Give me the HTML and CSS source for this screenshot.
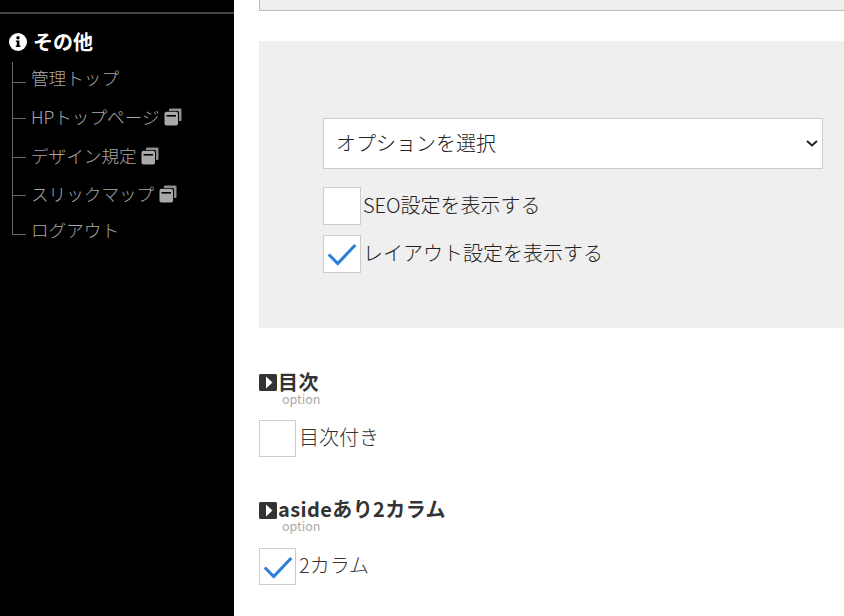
FILE: index.html
```html
<!DOCTYPE html>
<html lang="ja">
<head>
    <meta charset="UTF-8">
    <meta name="viewport" content="width=device-width, initial-scale=1.0">
    <title>その他</title>
    <link rel="stylesheet" href="styles.css">
</head>
<body>
    <svg class="defs" width="0" height="0">
        <symbol id="copy" viewBox="0 0 18 18">
            <path d="M5 1.5Q5 0.5 6 0.5H16.5Q17.5 0.5 17.5 1.5V12Q17.5 13 16.5 13H15V4.5Q15 3 13.5 3H5Z" fill="#8d8d8d"/>
            <rect x="0.5" y="3.8" width="13.5" height="13.7" rx="2" fill="#a9a9a9"/>
            <rect x="2.5" y="7" width="9.5" height="1.6" fill="#000"/>
        </symbol>
        <symbol id="tick" viewBox="0 0 38 38">
            <path d="M5 19.5L14.5 29L33 9.5" fill="none" stroke="#2b7fd6" stroke-width="3.2"/>
        </symbol>
        <symbol id="arrow" viewBox="0 0 18 18">
            <rect width="18" height="17" rx="1.5" fill="#333"/>
            <path d="M7 2.5L13.5 8.5L7 14.5Z" fill="#fff"/>
        </symbol>
    </svg>

    <div class="page">
        <nav class="sidebar">
            <h2 class="side-title">
                <svg class="info-icon" viewBox="0 0 18 18">
                    <circle cx="9" cy="9" r="9" fill="#fff"/>
                    <circle cx="9" cy="4.8" r="1.7" fill="#000"/>
                    <path d="M6.8 7.4H10.4V12.6H11.4V14H6.8V12.6H7.8V8.8H6.8Z" fill="#000"/>
                </svg>
                その他
            </h2>
            <ul class="side-list">
                <li class="item-1">管理トップ</li>
                <li class="item-2">HPトップページ <svg class="copy-icon"><use href="#copy"/></svg></li>
                <li class="item-3">デザイン規定 <svg class="copy-icon"><use href="#copy"/></svg></li>
                <li class="item-4">スリックマップ <svg class="copy-icon"><use href="#copy"/></svg></li>
                <li class="item-5">ログアウト</li>
            </ul>
        </nav>

        <main class="content">
            <div class="top-box"></div>

            <div class="panel">
                <div class="select-wrap">
                    <select class="option-select">
                        <option>オプションを選択</option>
                    </select>
                    <svg class="select-arrow" viewBox="0 0 12 7">
                        <path d="M1 1L6 5.5L11 1" fill="none" stroke="#222" stroke-width="2"/>
                    </svg>
                </div>
                <div class="check-row">
                    <span class="check"></span>
                    <span>SEO設定を表示する</span>
                </div>
                <div class="check-row">
                    <span class="check"><svg class="tick"><use href="#tick"/></svg></span>
                    <span>レイアウト設定を表示する</span>
                </div>
            </div>

            <section class="group">
                <h3 class="group-title"><svg class="arrow-icon"><use href="#arrow"/></svg>目次</h3>
                <p class="group-sub">option</p>
                <div class="check-row small">
                    <span class="check"></span>
                    <span>目次付き</span>
                </div>
            </section>

            <section class="group">
                <h3 class="group-title"><svg class="arrow-icon"><use href="#arrow"/></svg>asideあり2カラム</h3>
                <p class="group-sub">option</p>
                <div class="check-row small">
                    <span class="check"><svg class="tick"><use href="#tick"/></svg></span>
                    <span>2カラム</span>
                </div>
            </section>
        </main>
    </div>
</body>
</html>
```

FILE: styles.css
```css
* {
    box-sizing: border-box;
}
html, body {
    margin: 0;
    padding: 0;
    height: 616px;
    overflow: hidden;
}
body {
    font-family: "Noto Sans CJK JP", "Noto Sans", sans-serif;
    font-weight: 300;
    background-color: #fff;
    color: #333;
}
.defs {
    display: block;
    height: 0;
}
.page {
    display: flex;
    height: 616px;
}
.sidebar {
    width: 234px;
    flex-shrink: 0;
    background-color: #000;
    padding-top: 12px;
}
.side-title {
    display: flex;
    align-items: center;
    gap: 6px;
    height: 39px;
    margin: 0;
    padding: 19px 0 0 9px;
    border-top: 2px solid #444;
    font-size: 20px;
    font-weight: bold;
    line-height: 18px;
    color: #fff;
}
.info-icon {
    width: 18px;
    height: 18px;
}
.side-list {
    list-style: none;
    margin: 11px 0 0 12px;
    padding: 0;
    font-size: 17.6px;
    color: #a6a6a6;
}
.side-list li {
    position: relative;
    display: flex;
    align-items: center;
    gap: 5px;
    white-space: pre;
    height: 38.5px;
    padding-left: 19px;
    line-height: 1;
}
.side-list li::before {
    content: "";
    position: absolute;
    left: 0;
    top: 0;
    width: 13px;
    height: 20px;
    border-left: 1px solid #666;
    border-bottom: 1px solid #666;
}
.side-list li::after {
    content: "";
    position: absolute;
    left: 0;
    top: 20px;
    bottom: 0;
    border-left: 1px solid #666;
}
.side-list .item-1 {
    height: 36px;
    padding-bottom: 4px;
}
.side-list .item-5 {
    height: 33px;
}
.side-list .item-5::after {
    display: none;
}
.copy-icon {
    width: 18px;
    height: 18px;
    margin-left: -4px;
}
.content {
    flex: 1;
    min-width: 0;
    padding-left: 25px;
}
.top-box {
    height: 11px;
    margin-bottom: 30px;
    background-color: #efefef;
    border-left: 1px solid #bbb;
    border-bottom: 1px solid #bbb;
}
.panel {
    height: 287px;
    padding: 77px 0 0 64px;
    background-color: #efefef;
}
.select-wrap {
    position: relative;
    width: 500px;
    margin-bottom: 18px;
}
.option-select {
    display: block;
    width: 100%;
    height: 51px;
    padding: 0 12px 2px;
    appearance: none;
    background-color: #fff;
    border: 1px solid #ccc;
    border-radius: 0;
    font-family: inherit;
    font-size: 20px;
    font-weight: inherit;
    color: #222;
}
.select-arrow {
    position: absolute;
    right: 5px;
    top: 22px;
    width: 12px;
    height: 7px;
    pointer-events: none;
}
.check-row {
    display: flex;
    align-items: center;
    height: 38px;
    margin-bottom: 10px;
    font-size: 20px;
    line-height: 1;
    color: #222;
}
.check-row span:last-child {
    padding-bottom: 3px;
}
.check {
    width: 38px;
    height: 38px;
    flex-shrink: 0;
    margin-right: 2px;
    background-color: #fff;
    border: 1px solid #ccc;
}
.tick {
    display: block;
    width: 36px;
    height: 36px;
}
.check-row.small {
    height: 37px;
    margin-bottom: 0;
    color: #333;
}
.check-row.small .check {
    width: 37px;
    height: 37px;
    margin-right: 3px;
}
.group {
    height: 127px;
}
.group:first-of-type {
    margin-top: 46px;
}
.group-title {
    display: flex;
    align-items: flex-start;
    height: 18px;
    margin: 0;
    font-size: 20px;
    font-weight: bold;
    letter-spacing: 0.4px;
    line-height: 15px;
    color: #333;
}
.arrow-icon {
    width: 18px;
    height: 18px;
    margin-right: 1px;
}
.group + .group .arrow-icon {
    margin-top: 1px;
}
.group-sub {
    height: 12px;
    margin: 1px 0 15px 23px;
    font-size: 12.5px;
    font-weight: 400;
    line-height: 12px;
    color: #aaa;
}
.group + .group .group-sub {
    margin-bottom: 16px;
}
```
